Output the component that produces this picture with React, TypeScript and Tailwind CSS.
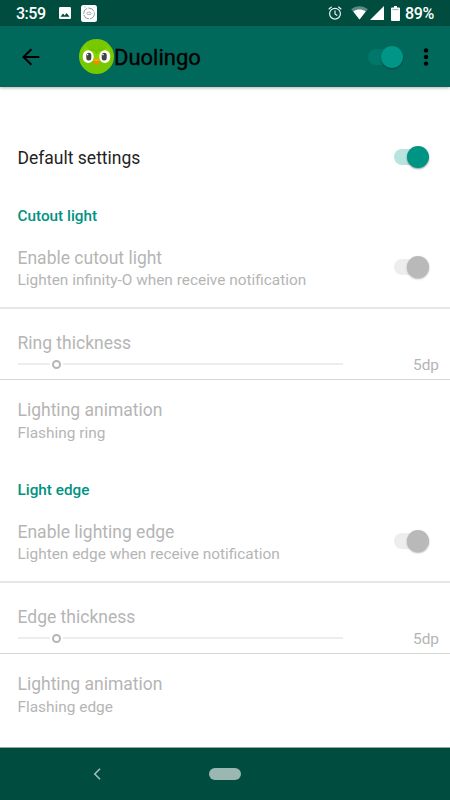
import React from "react"
import { cva } from "class-variance-authority"
import clsx from "clsx"

const track = cva("absolute left-0 top-[3px] h-4 w-[33px] rounded-full", {
  variants: {
    tone: {
      bar: "bg-[#007769]",
      on: "bg-[#b9e3de]",
      off: "bg-[#ededed]",
    },
  },
})

const thumb = cva("absolute right-0 top-0 size-[22px] rounded-full", {
  variants: {
    tone: {
      bar: "bg-[#009687] shadow-[0_1px_2px_rgba(0,0,0,0.35)]",
      on: "bg-[#009485] shadow-[0_1px_2px_rgba(0,0,0,0.4)]",
      off: "bg-[#b9b9b9] shadow-[0_1px_2px_rgba(0,0,0,0.3)]",
    },
  },
})

interface SwitchProps {
  tone: "bar" | "on" | "off"
  className?: string
}

function Switch({ tone, className }: SwitchProps) {
  return (
    <span
      role="switch"
      aria-checked={tone !== "off"}
      className={clsx("relative block h-[22px] w-[35px] shrink-0", className)}
    >
      <span className={track({ tone })} />
      <span className={thumb({ tone })} />
    </span>
  )
}

function StatusBar() {
  return (
    <div className="flex h-[26px] shrink-0 items-center bg-[#004d40] pl-4 pr-[15px] text-white">
      <span className="w-[43px] pt-px text-[16px] font-medium leading-[26px] tracking-[-0.5px]">3:59</span>
      {/* Picture */}
      <svg className="h-3 w-3" viewBox="0 0 12 12">
        <rect width="12" height="12" rx="1.2" fill="#fff" />
        <path d="M1.5 9.8 4 6.6l1.7 2L7.6 6l3 3.8z" fill="#004d40" />
      </svg>
      {/* Washer */}
      <svg className="ml-[10px] h-[17px] w-4" viewBox="0 0 16 17">
        <rect width="16" height="17" rx="2.5" fill="#fff" />
        <circle cx="8" cy="8.5" r="5.4" fill="none" stroke="#6f8983" strokeWidth="0.8" strokeDasharray="7 1" />
        <rect x="6" y="7.2" width="4" height="2.4" rx="0.8" fill="none" stroke="#6f8983" strokeWidth="0.6" />
        <path d="M3 2h2M12.8 2.6h.8" stroke="#8aa09b" strokeWidth="0.5" />
      </svg>
      <div className="ml-auto flex items-center">
        {/* Alarm */}
        <svg className="mr-[9px] h-[14px] w-[14px]" viewBox="0 0 14 14" fill="none" stroke="#e8f0ee" strokeWidth="1.2">
          <circle cx="7" cy="7.7" r="5.4" />
          <path d="M7 4.6v3.3l2.3 1.5M.7 3.2 3.7.7M13.3 3.2l-3-2.5" />
        </svg>
        {/* Wifi */}
        <svg className="mr-[2px] h-[14px] w-[17px]" viewBox="0 0 17 14">
          <path d="M8.5 13.6.2 3.2C5-.7 12-.7 16.8 3.2z" fill="#fff" opacity="0.35" />
          <path d="M8.5 13.6 2.3 5.5c3.6-2.6 8.8-2.6 12.4 0z" fill="#fff" />
        </svg>
        {/* Signal */}
        <svg className="mr-[7px] h-[14px] w-[14px]" viewBox="0 0 14 14">
          <path d="M0 14 14 0v14z" fill="#fff" />
        </svg>
        {/* Battery */}
        <svg className="mr-[5px] h-[15px] w-[9px]" viewBox="0 0 9 15">
          <path d="M3 0h3v1.6h2.1q.9 0 .9.9v11.6q0 .9-.9.9H.9Q0 15 0 14.1V2.5q0-.9.9-.9H3z" fill="#fff" />
          <path d="M1.5 3.6h6" stroke="#6d948c" strokeWidth="0.7" />
        </svg>
        <span className="w-[30px] whitespace-nowrap pt-px text-[16px] font-medium leading-[26px] tracking-[-0.4px]">89%</span>
      </div>
    </div>
  )
}

function OwlLogo() {
  return (
    <svg className="size-[35px]" viewBox="0 0 35 35">
      <circle cx="17.5" cy="17.5" r="17.5" fill="#78c800" />
      <path d="M6.5 6.5q3 3.5 7.5 3.4 2 .2 3.5 2 1.5-1.8 3.5-2 4.5.1 7.5-3.4 3.2 5.500 2.500 10.500l-13.500 4L4 17q-.7-5 2.500-10.500z" fill="#84d400" />
      <path d="M6.5 6.5q2.500 5 7.500 5.400 2.500.3 3.500 3.600 1-3.300 3.500-3.600 5-.4 7.500-5.400-3 3.500-7.500 3.400-2 .2-3.500 2-1.500-1.800-3.500-2-4.500.1-7.500-3.400z" fill="#65b100" opacity="0.6" />
      <rect x="3.8" y="11.3" width="10.8" height="12.6" rx="5.4" fill="#fff" />
      <rect x="20.4" y="11.3" width="10.8" height="12.6" rx="5.4" fill="#fff" />
      <rect x="7.3" y="13.8" width="5" height="7.6" rx="2.5" fill="#434343" />
      <rect x="22.7" y="13.8" width="5" height="7.6" rx="2.5" fill="#434343" />
      <circle cx="8.6" cy="15.6" r="0.8" fill="#fff" />
      <circle cx="24" cy="15.6" r="0.8" fill="#fff" />
      <path d="M14 21.600q.4-1.900 3.500-1.900t3.500 1.900q-.4 2.200-3.500 4.700-3.100-2.500-3.500-4.700z" fill="#f48800" />
      <path d="M14 21.600q.4-1.900 3.500-1.900t3.500 1.900q-3.500 1.200-7 0z" fill="#ffa800" />
    </svg>
  )
}

function AppBar() {
  return (
    <header className="relative z-10 flex h-[61px] shrink-0 items-center bg-[#00695c] pl-[22px] pr-[21px] shadow-[0_1px_3px_rgba(0,0,0,0.3)]">
      <svg className="size-[18px]" viewBox="0 0 18 18" fill="none" stroke="#000" strokeWidth="2">
        <path d="M17.3 9H1.8M9.4 1.2 1.5 9l7.9 7.8" />
      </svg>
      <div className="ml-[39px] flex items-center">
        <OwlLogo />
        <h1 className="pt-[2px] text-[22px] leading-[35px] text-black [-webkit-text-stroke:0.35px_#000]">Duolingo</h1>
      </div>
      <Switch tone="bar" className="ml-auto" />
      <svg className="ml-[20.5px] h-[18px] w-[6px]" viewBox="0 0 6 18">
        <circle cx="3" cy="2.4" r="2.2" />
        <circle cx="3" cy="9" r="2.2" />
        <circle cx="3" cy="15.6" r="2.2" />
      </svg>
    </header>
  )
}

interface SectionProps {
  heading: string
  toggleTitle: string
  toggleSummary: string
  sliderTitle: string
  animation: string
}

function Section({ heading, toggleTitle, toggleSummary, sliderTitle, animation }: SectionProps) {
  return (
    <section className="text-[#b5b5b5]">
      <h2 className="flex h-12 items-center pl-[17.5px] pt-px text-[15.3px] font-medium text-[#009282]">{heading}</h2>

      <div className="flex h-[69px] items-start justify-between border-b-2 border-[#e6e6e6] pl-[17.5px] pr-[21.5px] pt-[7px]">
        <div>
          <p className="text-[17.5px] leading-[22px]">{toggleTitle}</p>
          <p className="mt-px text-[15.4px] leading-[20px]">{toggleSummary}</p>
        </div>
        <Switch tone="off" className="mt-[9px]" />
      </div>

      <div className="h-[71px] border-b border-[#d6d6d6] pl-[17.5px] pr-[11px] pt-[23px]">
        <p className="text-[17.5px] leading-[22px]">{sliderTitle}</p>
        <div className="flex h-5 items-center justify-between">
          <div className="flex w-[325px] items-center">
            <span className="h-[2px] w-8 bg-[#ededed]" />
            <span className="mx-[2px] size-[9px] rounded-full border-2 border-[#b5b5b5]" />
            <span className="h-[2px] flex-1 bg-[#ededed]" />
          </div>
          <span className="pt-[2px] text-[15.4px] leading-[20px]">5dp</span>
        </div>
      </div>

      <div className="h-[86px] pl-[17.5px] pt-[19px]">
        <p className="text-[17.5px] leading-[22px]">Lighting animation</p>
        <p className="mt-[2px] text-[15.4px] leading-[20px]">{animation}</p>
      </div>
    </section>
  )
}

function NavBar() {
  return (
    <nav className="flex h-[53px] shrink-0 items-center border-t border-[#8fa9a4] bg-[#004d40] pl-[93px]">
      <svg className="h-[12px] w-2" viewBox="0 0 8 12" fill="none" stroke="#a3bdb8" strokeWidth="1.6">
        <path d="M7 .8 1.8 6 7 11.2" />
      </svg>
      <span className="ml-[108px] h-[12px] w-[32px] rounded-full bg-[#9ab7b2]" />
    </nav>
  )
}

export default function App() {
  return (
    <div className="flex h-[800px] w-[450px] flex-col overflow-hidden bg-white font-['Roboto',sans-serif]">
      <StatusBar />
      <AppBar />
      <main className="flex-1 pt-[37px]">
        <div className="flex h-[68px] items-center justify-between pl-[17.5px] pr-[21.5px]">
          <p className="text-[17.5px] leading-[22px] text-[#1f1f1f]">Default settings</p>
          <Switch tone="on" className="-mt-[2px]" />
        </div>
        <Section
          heading="Cutout light"
          toggleTitle="Enable cutout light"
          toggleSummary="Lighten infinity-O when receive notification"
          sliderTitle="Ring thickness"
          animation="Flashing ring"
        />
        <Section
          heading="Light edge"
          toggleTitle="Enable lighting edge"
          toggleSummary="Lighten edge when receive notification"
          sliderTitle="Edge thickness"
          animation="Flashing edge"
        />
      </main>
      <NavBar />
    </div>
  )
}
